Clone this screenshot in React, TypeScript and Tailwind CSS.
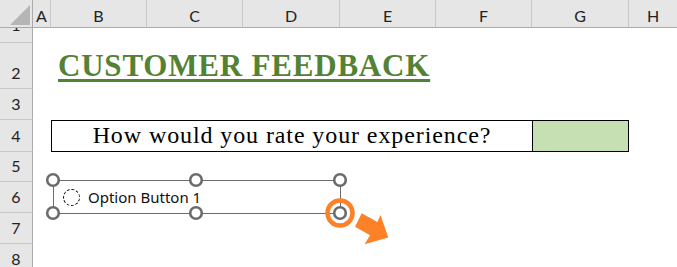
const cols = ["A", "B", "C", "D", "E", "F", "G", "H"];
const rows = ["1", "2", "3", "4", "5", "6", "7", "8"];

const handles = [
  [53, 180],
  [196, 180],
  [340, 180],
  [53, 213],
  [196, 213],
  [340, 213],
];

export default function App() {
  return (
    <div className="relative w-[677px] h-[267px] overflow-hidden bg-white font-['Lato',sans-serif] text-[#222]">
      <div className="grid h-full grid-cols-[33px_18px_96px_96px_97px_96px_96px_97px_1fr] grid-rows-[28px_15px_46px_31px_32px_30px_31px_31px_1fr]">
        {/* corner */}
        <div className="relative bg-[#e6e6e6] border-r border-b border-[#ababab]">
          <svg className="absolute inset-0" width="33" height="28">
            <polygon points="10,25 30,25 30,5" fill="#b5b5b5" />
          </svg>
        </div>
        {cols.map((c, i) => (
          <div
            key={c}
            className={`flex items-end justify-center pb-[3px] text-[16px] leading-none bg-[#e6e6e6] border-b border-[#ababab] ${
              i < cols.length - 1 ? "border-r border-r-[#c8c8c8]" : ""
            }`}
          >
            {c}
          </div>
        ))}

        {rows.map((r, ri) => (
          <div
            key={r}
            className={`col-start-1 flex justify-center overflow-hidden bg-[#e6e6e6] border-r border-[#ababab] text-[16px] leading-none ${
              ri < rows.length - 1 ? "border-b border-b-[#c8c8c8]" : ""
            } ${ri === 0 ? "items-end pb-[9px]" : ri === rows.length - 1 ? "items-start pt-[7px]" : "items-end pb-[7px]"}`}
            style={{ gridRowStart: ri + 2 }}
          >
            {r}
          </div>
        ))}

        {/* row 2: title */}
        <div className="col-start-3 col-end-9 row-start-3 flex items-end pl-[7px] pb-[8px]">
          <span className="font-['Liberation_Serif',serif] font-bold text-[31px] tracking-[0.8px] leading-none text-[#548235] underline decoration-[2.5px] underline-offset-[3px]">
            CUSTOMER FEEDBACK
          </span>
        </div>

        {/* row 4: question */}
        <div className="col-start-3 col-end-8 row-start-5 flex items-end justify-center pb-[4px] border-t border-b border-l border-black font-['Liberation_Serif',serif] text-[24px] tracking-[0.9px] leading-none text-black">
          How would you rate your experience?
        </div>
        <div className="col-start-8 col-end-9 row-start-5 bg-[#c6e0b4] border border-black" />
      </div>

      {/* option button control, selected */}
      <div className="absolute left-[53px] top-[180px] w-[288px] h-[34px] border border-[#6d6d6d] flex items-center pl-[9px] gap-[8px]">
        <div className="w-[17px] h-[17px] rounded-full border-[1.5px] border-dashed border-black" />
        <span className="font-['Noto_Sans',sans-serif] text-[15px] leading-none text-[#111]">Option Button 1</span>
      </div>

      <svg className="absolute inset-0 pointer-events-none" width="677" height="267">
        <circle cx="340" cy="213" r="12.5" fill="none" stroke="#fd8126" strokeWidth="4.5" />
        {handles.map(([x, y]) => (
          <circle key={`${x}-${y}`} cx={x} cy={y} r="5.8" fill="white" stroke="#6b6b6b" strokeWidth="2.6" />
        ))}
        <polygon
          points="361.7,213.3 377.4,222.1 380.5,215 388.3,237.5 364.5,244.3 370.1,235.2 355,226.7"
          fill="#fd8126"
        />
      </svg>
    </div>
  );
}
